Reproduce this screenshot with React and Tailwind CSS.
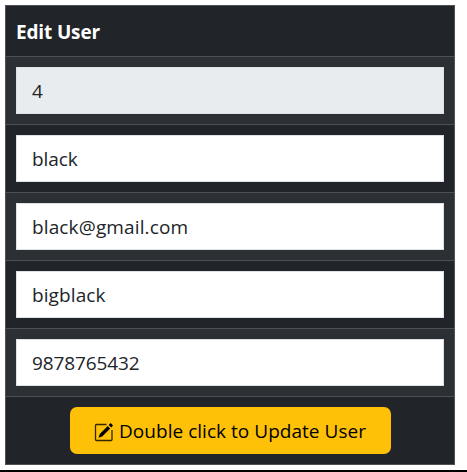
const rows = [
  { value: "4", spacing: "", fill: "bg-[#e9ecef]" },
  { value: "black", spacing: "tracking-[-0.1px]", fill: "bg-white" },
  { value: "black@gmail.com", spacing: "tracking-[0.13px]", fill: "bg-white" },
  { value: "bigblack", spacing: "tracking-[0.1px]", fill: "bg-white" },
  { value: "9878765432", spacing: "tracking-[-0.1px]", fill: "bg-white" },
];

function EditIcon() {
  return (
    <svg width="20" height="20" viewBox="0 0 20 20" className="shrink-0">
      <path d="M12.5 2.5H2.5Q1.5 2.5 1.5 3.5V17.5Q1.5 18.5 2.5 18.5H17Q18 18.5 18 17.5V8" fill="none" stroke="#000" strokeOpacity="0.8" strokeWidth="1.3" />
      <path d="M13.7 3.9L16.2 6.4L8.2 14.4L4.5 15.8L5.8 11.9Z" fill="#000" />
      <path d="M14.7 2.9L16 1.6Q16.6 1.1 17.2 1.6L18.6 3Q19.1 3.6 18.6 4.1L17.2 5.4Z" fill="#000" />
    </svg>
  );
}

export default function App() {
  return (
    <div className="h-[472px] w-[467px] overflow-hidden bg-white pt-[5px] font-['Open_Sans','Noto_Sans',sans-serif] text-[19px] text-[#212529]">
      <div className="ml-[5px] w-[450px] border border-[#4d5154] bg-[#212529]">
        <div className="flex h-[51px] items-center border-b border-[#4d5154] px-[10px] pt-[2px] font-bold tracking-[-0.15px] text-white">
          Edit User
        </div>
        {rows.map(({ value, spacing, fill }) => (
          <div key={value} className="h-[68px] border-b border-[#4d5154] px-[10px] pt-[10px] odd:bg-[#212529] even:bg-[#2c3034]">
            <div className={`flex h-[47px] items-center border border-[#dee2e6] px-[15px] pt-[2px] ${fill} ${spacing}`}>
              {value}
            </div>
          </div>
        ))}
        <div className="flex h-[67px] justify-center pt-[10px]">
          <button className="flex h-[47px] w-[321px] items-center justify-center gap-[5px] whitespace-nowrap rounded-[7px] bg-[#ffc107] pt-[2px] tracking-[0.03px] text-black">
            <EditIcon />
            <span>Double click to Update User</span>
          </button>
        </div>
      </div>
      <div className="mt-[5px] h-[2px] bg-black" />
    </div>
  );
}
